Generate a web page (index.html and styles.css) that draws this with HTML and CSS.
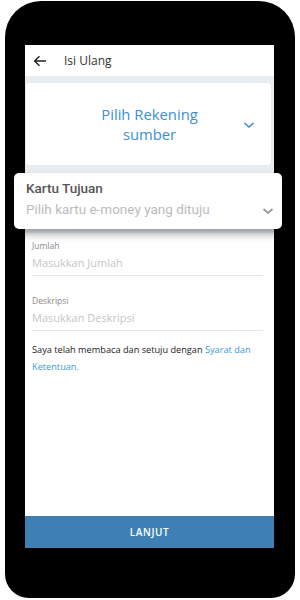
FILE: index.html
```html
<!DOCTYPE html>
<html lang="en">
<head>
    <meta charset="UTF-8">
    <meta name="viewport" content="width=device-width, initial-scale=1.0">
    <title>Isi Ulang</title>
    <link rel="stylesheet" href="styles.css">
</head>
<body>
    <div class="phone">
        <div class="screen">
            <div class="topbar">
                <svg class="back" width="14" height="12" viewBox="0 0 14 12">
                    <path d="M13 6H2M6.5 1.2L1.6 6l4.9 4.8" fill="none" stroke="#222" stroke-width="1.4"/>
                </svg>
                <span class="title">Isi Ulang</span>
            </div>

            <div class="grey-area">
                <div class="source-card">
                    <div class="source-text">
                        <span class="line">Pilih Rekening</span>
                        <span class="line">sumber</span>
                    </div>
                    <svg class="chev" width="12" height="8" viewBox="0 0 12 8">
                        <path d="M1.5 2l4.5 4 4.5-4" fill="none" stroke="#3a8fd6" stroke-width="1.6"/>
                    </svg>
                </div>
            </div>

            <div class="form">
                <div class="field">
                    <div class="label">Jumlah</div>
                    <div class="input">Masukkan Jumlah</div>
                </div>
                <div class="field">
                    <div class="label">Deskripsi</div>
                    <div class="input">Masukkan Deskripsi</div>
                </div>
                <p class="terms">Saya telah membaca dan setuju dengan <span class="link">Syarat dan</span> <span class="link">Ketentuan.</span></p>
            </div>

            <button class="next">LANJUT</button>
        </div>

        <!-- highlighted dropdown floating over the screen -->
        <div class="target-card">
            <div class="target-title">Kartu Tujuan</div>
            <div class="target-row">
                <span>Pilih kartu e-money yang dituju</span>
                <svg width="12" height="8" viewBox="0 0 12 8">
                    <path d="M1.5 2l4.5 4 4.5-4" fill="none" stroke="#9a9a9a" stroke-width="1.8"/>
                </svg>
            </div>
        </div>
    </div>
</body>
</html>
```

FILE: styles.css
```css
body {
    margin: 0;
    background: #fff;
    font-family: "Open Sans", Arial, sans-serif;
}
.phone {
    position: relative;
    width: 290px;
    height: 597px;
    margin: 1px 0 0 5px;
    background: #000;
    border-radius: 36px 36px 24px 24px;
    padding: 44px 21px 50px 20px;
    box-sizing: border-box;
}
.screen {
    height: 503px;
    background: #fff;
    display: flex;
    flex-direction: column;
}
.topbar {
    height: 31px;
    display: flex;
    align-items: center;
    padding-left: 8px;
    flex-shrink: 0;
}
.back {
    margin-right: 17px;
}
.title {
    font-size: 12px;
    color: #333;
}
.grey-area {
    background: #e9edf0;
    padding: 7px 3px 68px 1px;
}
.source-card {
    height: 82px;
    background: #fff;
    border-radius: 3px;
    box-shadow: 0 0 1px rgba(0, 0, 0, 0.15);
    display: flex;
    align-items: center;
    position: relative;
}
.source-text {
    flex: 1;
    display: flex;
    flex-direction: column;
    align-items: center;
    font-size: 14.8px;
    color: #3a8fd6;
    padding-left: 2px;
}
.source-text .line {
    line-height: 20.5px;
}
.chev {
    position: absolute;
    right: 16px;
    top: 38px;
}
.form {
    flex: 1;
    padding: 7px 11px 0 7px;
}
.field {
    margin-bottom: 19px;
}
.label {
    font-size: 8.5px;
    line-height: 12px;
    color: #8a8a8a;
}
.input {
    font-size: 11px;
    line-height: 18px;
    padding: 2px 0 3px;
    color: #c6c6c6;
    border-bottom: 1px solid #e8e8e8;
}
.terms {
    margin: -9px 0 0;
    font-size: 9.2px;
    line-height: 17px;
    color: #222;
}
.link {
    color: #3a9ad8;
}
.next {
    height: 32px;
    border: none;
    background: #3e80b4;
    color: #fff;
    font-family: "Open Sans", Arial, sans-serif;
    font-size: 10px;
    font-weight: 600;
    letter-spacing: 0.6px;
    flex-shrink: 0;
}
.target-card {
    position: absolute;
    left: 9px;
    top: 172px;
    width: 268px;
    height: 56px;
    background: #fff;
    border-radius: 5px;
    box-shadow: 0 5px 8px rgba(0, 0, 0, 0.35);
    padding: 7px 8px 0 12px;
    box-sizing: border-box;
    font-family: Roboto, "Liberation Sans", sans-serif;
}
.target-title {
    font-size: 13.5px;
    font-weight: 500;
    color: #555;
    line-height: 17px;
}
.target-row {
    display: flex;
    justify-content: space-between;
    align-items: center;
    font-size: 13.5px;
    color: #bcbcbc;
    margin-top: 4px;
}
.target-row svg {
    margin-top: 4px;
}
```
